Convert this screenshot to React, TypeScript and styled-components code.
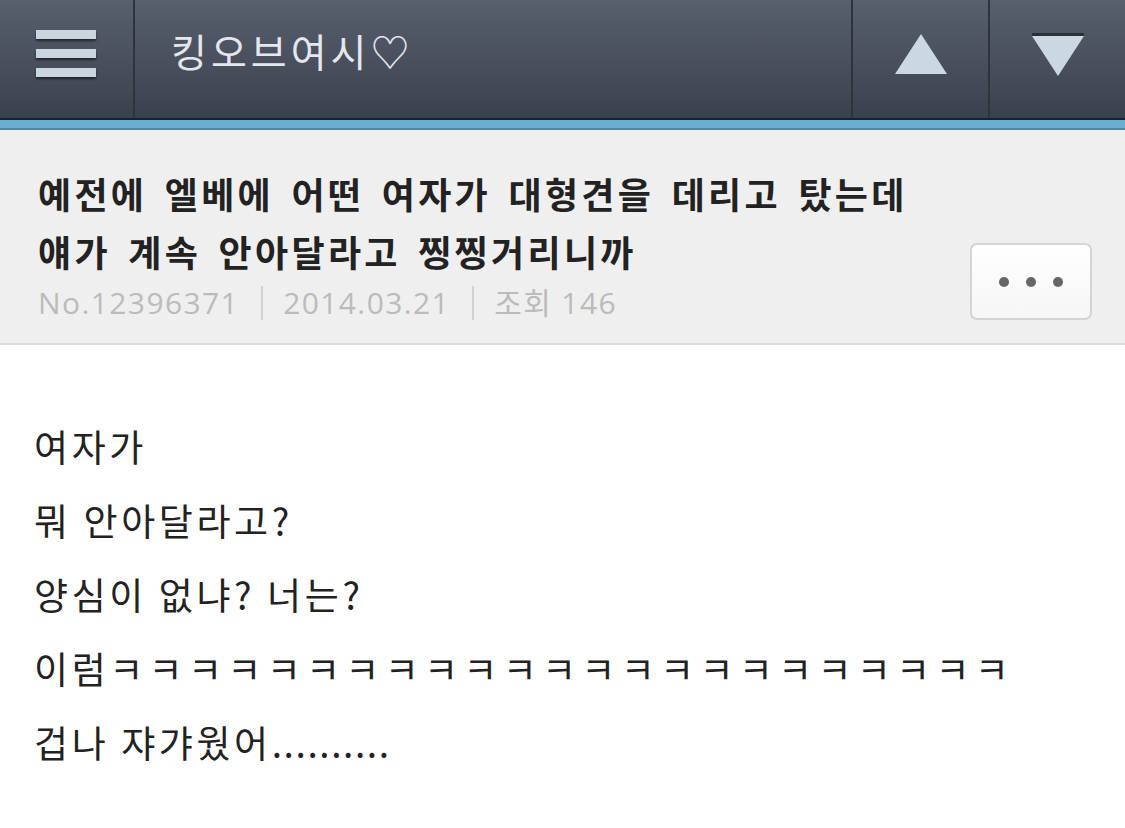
import React from "react";
import styled, { createGlobalStyle } from "styled-components";

const GlobalStyle = createGlobalStyle`
  html, body {
    margin: 0;
    padding: 0;
    background: #ffffff;
  }
  body {
    font-family: "Noto Sans CJK KR", "Noto Sans", sans-serif;
  }
`;

const Page = styled.div`
  width: 1125px;
  height: 828px;
  overflow: hidden;
  background: #ffffff;
`;

const Header = styled.header`
  height: 118px;
  display: flex;
  background: linear-gradient(to bottom, #585f6d 0%, #4a505d 50%, #3b414c 100%);
  border-bottom: 2px solid #1c2028;
`;

const MenuButton = styled.div`
  width: 133px;
  display: flex;
  flex-direction: column;
  align-items: center;
  justify-content: center;
  gap: 10px;
  border-right: 2px solid #2e333c;
  padding-bottom: 12px;
`;

const MenuBar = styled.span`
  display: block;
  width: 60px;
  height: 9px;
  margin-left: -2px;
  background: #c9d5df;
  box-shadow: 0 2px 2px rgba(0, 0, 0, 0.55);
`;

const Title = styled.div`
  flex: 1;
  display: flex;
  align-items: center;
  padding-left: 36px;
  padding-bottom: 18px;
  color: #e4e8ee;
  font-size: 39px;
  letter-spacing: 4px;
`;

const NavButton = styled.div`
  width: 135px;
  display: flex;
  align-items: center;
  justify-content: center;
  border-left: 2px solid #2e333c;
  padding-bottom: 8px;
`;

const BlueStrip = styled.div`
  height: 8px;
  background: #6aaed1;
  border-bottom: 2px solid #4f86a6;
`;

const PostHead = styled.section`
  display: flex;
  justify-content: space-between;
  align-items: flex-end;
  background: #efefef;
  padding: 34px 33px 23px 38px;
  border-bottom: 2px solid #dcdcdc;
`;

const HeadText = styled.div`
  display: flex;
  flex-direction: column;
`;

const PostTitle = styled.h1`
  margin: 0;
  font-size: 36px;
  font-weight: 700;
  line-height: 58px;
  color: #222222;
  letter-spacing: 3.3px;
  word-spacing: 6px;
`;

const Meta = styled.div`
  display: flex;
  align-items: center;
  margin-top: 6px;
  font-family: "Open Sans", "Noto Sans CJK KR", sans-serif;
  font-size: 30px;
  letter-spacing: 1.4px;
  color: #bbbbbb;
`;

const MetaItem = styled.span<{ $first?: boolean }>`
  padding-left: ${(p) => (p.$first ? "0" : "20px")};
  padding-right: 22px;
  line-height: 34px;
  border-left: ${(p) => (p.$first ? "none" : "2px solid #d2d2d2")};
`;

const MoreButton = styled.div`
  width: 122px;
  height: 77px;
  display: flex;
  align-items: center;
  justify-content: center;
  gap: 17px;
  background: linear-gradient(to bottom, #ffffff, #f6f6f6);
  border: 2px solid #d4d4d4;
  border-radius: 7px;
  box-sizing: border-box;
`;

const Dot = styled.span`
  width: 10px;
  height: 10px;
  border-radius: 50%;
  background: #666666;
`;

const Body = styled.main`
  padding: 64px 34px 0;
`;

const Line = styled.p`
  margin: 0;
  font-size: 37px;
  line-height: 74px;
  letter-spacing: 3.6px;
  color: #222222;
`;

const Laugh = styled.span`
  letter-spacing: 5.3px;
`;

const Ellipsis = styled.span`
  letter-spacing: 1.6px;
`;

const Triangle: React.FC<{ down?: boolean }> = ({ down }) => (
  <svg width="54" height="44" viewBox="0 0 54 44">
    <polygon points={down ? "1,3 53,3 27,43" : "27,1 53,41 1,41"} fill="#cbd7e1" />
    {down && <rect x="1" y="0" width="52" height="3" fill="#2a2f38" />}
  </svg>
);

const App: React.FC = () => {
  const kk = "ㅋ".repeat(23);
  return (
    <Page>
      <GlobalStyle />
      <Header>
        <MenuButton>
          <MenuBar />
          <MenuBar />
          <MenuBar />
        </MenuButton>
        <Title>킹오브여시♡</Title>
        <NavButton>
          <Triangle />
        </NavButton>
        <NavButton>
          <Triangle down />
        </NavButton>
      </Header>
      <BlueStrip />
      <PostHead>
        <HeadText>
          <PostTitle>
            예전에 엘베에 어떤 여자가 대형견을 데리고 탔는데
            <br />
            얘가 계속 안아달라고 찡찡거리니까
          </PostTitle>
          <Meta>
            <MetaItem $first>No.12396371</MetaItem>
            <MetaItem>2014.03.21</MetaItem>
            <MetaItem>조회 146</MetaItem>
          </Meta>
        </HeadText>
        <MoreButton>
          <Dot />
          <Dot />
          <Dot />
        </MoreButton>
      </PostHead>
      <Body>
        <Line>여자가</Line>
        <Line>뭐 안아달라고?</Line>
        <Line>양심이 없냐? 너는?</Line>
        <Line>
          이럼<Laugh>{kk}</Laugh>
        </Line>
        <Line>
          겁나 쟈갸웠어<Ellipsis>..........</Ellipsis>
        </Line>
      </Body>
    </Page>
  );
};

export default App;
